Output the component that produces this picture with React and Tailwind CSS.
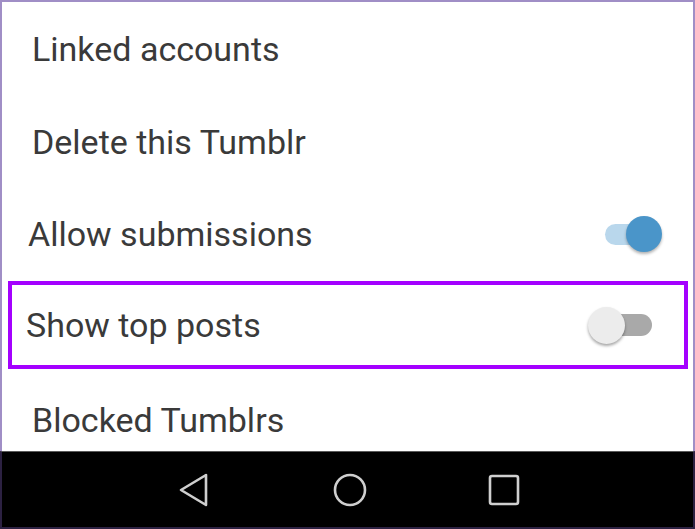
import React from 'react'

function Toggle({ on }) {
  if (on) {
    return (
      <div className="relative w-[64px] h-[38px] flex items-center">
        <div className="ml-[2px] w-[52px] h-[21px] rounded-full bg-[#b9d7ec]" />
        <div className="absolute right-[5px] top-[1px] w-[36px] h-[36px] rounded-full bg-[#4a95c9] shadow-[0_2px_3px_rgba(0,0,0,0.3)]" />
      </div>
    )
  }
  return (
    <div className="relative w-[66px] h-[38px] flex items-center">
      <div className="ml-[4px] w-[60px] h-[22px] rounded-full bg-[#a9a9a9]" />
      <div className="absolute left-0 top-[1px] w-[37px] h-[37px] rounded-full bg-[#ececec] shadow-[0_2px_3px_rgba(0,0,0,0.35)]" />
    </div>
  )
}

export default function App() {
  const text = "text-[34px] text-[#3a3a3a] font-['Roboto',sans-serif] leading-none"

  return (
    <div className="w-[695px] h-[529px] flex flex-col bg-white overflow-hidden">
      <div className="flex-1 flex flex-col border-t-2 border-x-2 border-[#a08ec6]">
        <div className="h-[94px] flex items-center pl-[30px]">
          <span className={text}>Linked accounts</span>
        </div>
        <div className="h-[92px] flex items-center pl-[30px]">
          <span className={text}>Delete this Tumblr</span>
        </div>
        <div className="h-[92px] flex items-center justify-between pl-[26px] pr-[26px]">
          <span className={text}>Allow submissions</span>
          <Toggle on />
        </div>
        <div className="mt-[1px] ml-[6px] mr-[5px] h-[88px] border-4 border-[#a400ff] flex items-center justify-between pl-[14px] pr-[30px]">
          <span className={text}>Show top posts</span>
          <Toggle on={false} />
        </div>
        <div className="flex-1 flex items-center pl-[30px] pt-[20px]">
          <span className={text}>Blocked Tumblrs</span>
        </div>
      </div>
      <div className="h-[78px] bg-black border-t border-[#5a5a5a] border-x-2 border-b-2 border-x-[#2c2142] border-b-[#2c2142] flex items-center">
        <div className="w-[176px]" />
        <svg width="32" height="36" viewBox="0 0 32 36" className="mt-[1px]">
          <path d="M28 3 L28 33 L3 18 Z" fill="none" stroke="#cfcfcf" strokeWidth="2.6" strokeLinejoin="round" />
        </svg>
        <div className="w-[123px]" />
        <svg width="34" height="34" viewBox="0 0 34 34" className="mt-[1px]">
          <circle cx="17" cy="17" r="15" fill="none" stroke="#cfcfcf" strokeWidth="2.6" />
        </svg>
        <div className="w-[121px]" />
        <svg width="32" height="32" viewBox="0 0 32 32" className="mt-[1px]">
          <rect x="2" y="2" width="28" height="28" rx="2" fill="none" stroke="#cfcfcf" strokeWidth="2.6" />
        </svg>
      </div>
    </div>
  )
}
